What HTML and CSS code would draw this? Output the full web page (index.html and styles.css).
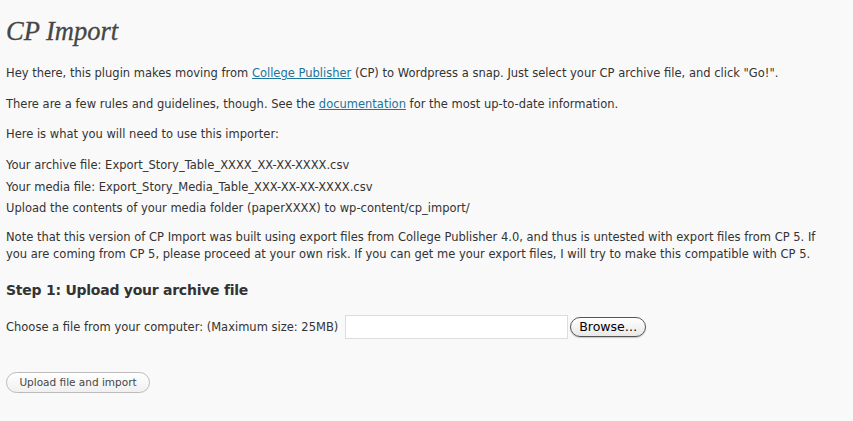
FILE: index.html
```html
<!DOCTYPE html>
<html>
<head>
<meta charset="utf-8">
<link rel="stylesheet" href="styles.css">
</head>
<body>
<div class="wrap">
  <h2 class="title">CP Import</h2>
  <p class="para">Hey there, this plugin makes moving from <a href="#">College Publisher</a> (CP) to Wordpress a snap. Just select your CP archive file, and click "Go!".</p>
  <p class="para">There are a few rules and guidelines, though. See the <a href="#">documentation</a> for the most up-to-date information.</p>
  <p class="para">Here is what you will need to use this importer:</p>
  <div class="reqs">
    <div>Your archive file: Export_Story_Table_XXXX_XX-XX-XXXX.csv</div>
    <div>Your media file: Export_Story_Media_Table_XXX-XX-XX-XXXX.csv</div>
    <div>Upload the contents of your media folder (paperXXXX) to wp-content/cp_import/</div>
  </div>
  <p class="para">Note that this version of CP Import was built using export files from College Publisher 4.0, and thus is untested with export files from CP 5. If you are coming from CP 5, please proceed at your own risk. If you can get me your export files, I will try to make this compatible with CP 5.</p>
  <h3 class="step">Step 1: Upload your archive file</h3>
  <div class="filerow">
    <span class="label">Choose a file from your computer: (Maximum size: 25MB)</span>
    <span class="filefield"></span>
    <span class="browse">Browse…</span>
  </div>
  <div class="submitrow">
    <span class="btn">Upload file and import</span>
  </div>
</div>
</body>
</html>
```
FILE: styles.css
```css
html, body {
  margin: 0;
  padding: 0;
  background: #f9f9f9;
}
.wrap {
  padding: 0 24px 0 6px;
  font-family: "DejaVu Sans", "Liberation Sans", sans-serif;
  font-size: 11.5px;
  color: #333;
}
.title {
  margin: 0;
  padding-top: 16px;
  font-family: "Liberation Serif", "DejaVu Serif", serif;
  font-style: italic;
  font-weight: normal;
  font-size: 26.5px;
  line-height: 30px;
  color: #464646;
  -webkit-text-stroke: 0.3px #464646;
}
.para {
  margin: 0;
  line-height: 17px;
}
.title + .para { margin-top: 19px; }
.para + .para { margin-top: 13.5px; }
.reqs {
  margin-top: 12px;
  line-height: 21.5px;
}
.reqs + .para { margin-top: 9px; }
a { color: #21759b; }
.step {
  margin: 17px 0 0;
  font-size: 14px;
  letter-spacing: -0.25px;
  line-height: 20px;
  font-weight: bold;
  color: #333;
}
.filerow {
  margin-top: 15px;
  display: flex;
  align-items: center;
  height: 24px;
}
.label { margin-right: 7px; }
.filefield {
  width: 221px;
  height: 22px;
  background: #fff;
  border: 1px solid #dcdcdc;
}
.browse {
  margin-left: 2px;
  height: 18px;
  width: 74px;
  border: 1px solid #555;
  border-radius: 10px;
  background: linear-gradient(#fff, #e8e8e8);
  display: flex;
  align-items: center;
  justify-content: center;
  font-size: 12.5px;
  color: #000;
  box-shadow: 0 1px 1px rgba(0,0,0,0.2);
}
.submitrow {
  margin-top: 33px;
}
.btn {
  display: inline-flex;
  align-items: center;
  justify-content: center;
  width: 142px;
  height: 19px;
  border: 1px solid #bbb;
  border-radius: 11px;
  background: linear-gradient(#fff, #f0f0f0);
  font-size: 10.5px;
  color: #464646;
}
```
